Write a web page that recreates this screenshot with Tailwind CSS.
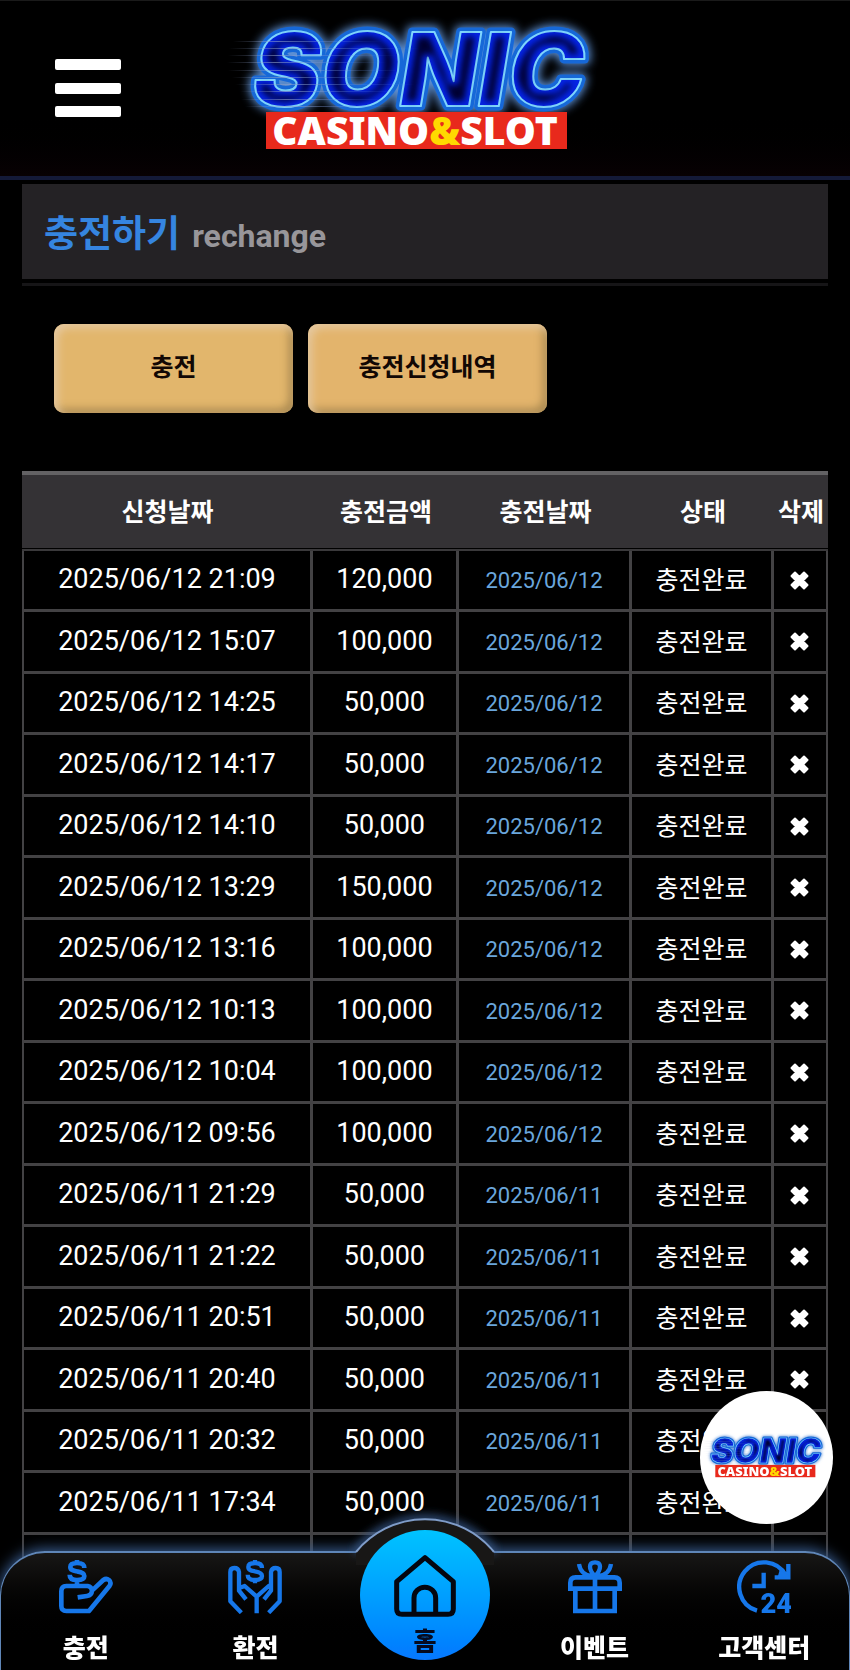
<!DOCTYPE html>
<html lang="ko">
<head>
<meta charset="utf-8">
<meta name="viewport" content="width=device-width, initial-scale=1">
<title>충전하기</title>
<script src="https://cdn.jsdelivr.net/npm/@tailwindcss/browser@4"></script>
</head>
<body class="min-h-screen bg-black text-white font-['Roboto','Noto_Sans_CJK_KR',sans-serif]">

<!-- shared logo artwork -->
<svg class="absolute size-0" aria-hidden="true">
  <defs>
    <linearGradient id="speed" x1="0" x2="1"><stop offset="0" stop-color="#8fa0c8" stop-opacity="0"/><stop offset=".3" stop-color="#8fa0c8" stop-opacity=".6"/><stop offset="1" stop-color="#4f7fe8" stop-opacity="0"/></linearGradient>
    <filter id="glow" x="-20%" y="-40%" width="140%" height="180%"><feGaussianBlur stdDeviation="5"/></filter>
    <filter id="core" x="-5%" y="-5%" width="110%" height="110%"><feMorphology operator="erode" radius="5"/><feGaussianBlur stdDeviation="3"/></filter>
    <symbol id="logo" overflow="visible">
      <g font-family="Inter, sans-serif" font-weight="900" font-style="italic" font-size="102" stroke-linejoin="round">
        <text x="33" y="96" fill="#3f7fd0" stroke="#5f93d8" stroke-width="12" filter="url(#glow)" aria-hidden="true">SONIC</text>
        <text x="33" y="96" fill="#1668d8" stroke="#1668d8" stroke-width="9" aria-hidden="true">SONIC</text>
        <text x="33" y="96" fill="#0423e6" stroke="#7fd6ff" stroke-width="2">SONIC</text>
        <text x="33" y="96" fill="#020230" filter="url(#core)" aria-hidden="true">SONIC</text>
      </g>
      <g fill="url(#speed)">
        <rect x="13" y="31" width="150" height="1"/><rect x="9" y="38" width="190" height="1"/><rect x="8" y="45" width="170" height="1"/><rect x="7" y="52" width="160" height="1"/><rect x="8" y="60" width="180" height="1"/><rect x="12" y="67" width="160" height="1"/><rect x="15" y="74" width="180" height="1"/><rect x="20" y="81" width="160" height="1"/><rect x="21" y="89" width="150" height="1"/><rect x="25" y="96" width="150" height="1"/>
      </g>
      <rect x="46" y="102" width="301" height="37" fill="#e8291c"/>
      <text x="195" y="135" text-anchor="middle" font-family="'Noto Sans', sans-serif" font-weight="900" font-size="39" fill="#fff">CASINO<tspan fill="#ffd900">&amp;</tspan>SLOT</text>
    </symbol>
  </defs>
</svg>

<header class="grid h-[180px] grid-cols-[1fr_auto_1fr] border-t border-b-4 border-t-[#1a1a1a] border-b-[#141a38] bg-linear-to-b from-black from-60% to-[#080103]">
  <button type="button" aria-label="메뉴" class="mt-[58px] ml-[55px] flex h-[58px] w-[66px] flex-col justify-between">
    <span class="h-[11px] w-full rounded-xs bg-white"></span>
    <span class="h-[11px] w-full rounded-xs bg-white"></span>
    <span class="h-[11px] w-full rounded-xs bg-white"></span>
  </button>
  <a href="#" aria-label="SONIC CASINO&amp;SLOT" class="mt-[9px]">
    <svg class="h-[160px] w-[400px]" viewBox="5 0 400 160"><use href="#logo"/></svg>
  </a>
</header>

<main class="px-[22px] pt-1">
  <div class="border-b-3 border-[#161517] pb-1">
    <h1 class="flex h-[95px] items-baseline gap-3 bg-[#242225] px-[22px] pt-6 text-[37px] leading-[54px] font-bold text-[#3585e0]">충전하기 <small class="text-[32px] font-bold text-[#98969a]">rechange</small></h1>
  </div>

  <div class="mt-[38px] flex gap-[15px] px-8">
    <button type="button" class="h-[89px] w-[239px] rounded-[10px] bg-[#e2b66c] pb-0.5 text-[25px] font-bold text-[#120804] shadow-[inset_4px_4px_8px_#e6c9a0,inset_-4px_-4px_8px_#a9884f]">충전</button>
    <button type="button" class="h-[89px] w-[239px] rounded-[10px] bg-[#e3b46c] pb-0.5 text-[25px] font-bold text-[#120804] shadow-[inset_4px_4px_8px_#e6c9a0,inset_-4px_-4px_8px_#a9884f]">충전신청내역</button>
  </div>

  <table class="mt-[58px] w-full table-fixed border-separate border-spacing-0 text-center">
    <thead class="text-[25px] leading-8">
      <tr class="h-[77px]">
        <th class="w-[36.1%] border-t-4 border-[#636264] bg-[#343235] p-0 pt-0.5">신청날짜</th>
        <th class="w-[18.1%] border-t-4 border-[#636264] bg-[#343235] p-0 pt-0.5">충전금액</th>
        <th class="w-[21.5%] border-t-4 border-[#636264] bg-[#343235] p-0 pt-0.5">충전날짜</th>
        <th class="w-[17.6%] border-t-4 border-[#636264] bg-[#343235] p-0 pt-0.5">상태</th>
        <th class="border-t-4 border-[#636264] bg-[#343235] p-0 pt-0.5 whitespace-nowrap">삭제</th>
      </tr>
      <tr class="h-[3px]"><td colspan="5" class="border-t border-b-2 border-t-black border-b-[#3a393b] p-0"></td></tr>
    </thead>
    <tbody id="rows" class="text-[27px] leading-8"></tbody>
  </table>
</main>

<a href="#" aria-label="SONIC CASINO&amp;SLOT" class="fixed right-[17px] bottom-[146px] flex size-[133px] items-center rounded-full bg-white">
  <svg class="w-full" viewBox="0 0 400 160"><use href="#logo"/></svg>
</a>

<nav class="fixed inset-x-0 bottom-0 h-[119px] rounded-t-[45px] border-x border-t-2 border-[#5f86b8] bg-linear-to-b from-[#181716] to-black to-80% text-[25px] leading-8 font-black shadow-[0_-2px_14px_#3a5f94]">
  <svg class="absolute -top-[48px] left-1/2 h-[60px] w-[180px] -translate-x-1/2" viewBox="0 0 180 60" fill="none" aria-hidden="true">
    <path d="M21 47A89 89 0 0 1 159 47" stroke="#3a5f94" stroke-width="7" filter="url(#glow)"/>
    <path d="M21 47A89 89 0 0 1 159 47V60H21Z" fill="#181716"/>
    <path d="M21 47A89 89 0 0 1 159 47" stroke="#7f9cc8" stroke-width="2"/>
  </svg>
  <ul class="relative grid grid-cols-5 text-[#1677ea]">
    <li><a href="#" class="flex flex-col items-center gap-[19px] pt-[7px]">
      <svg class="size-[54px]" viewBox="0 0 162 162" fill="none" stroke="currentColor" stroke-width="14" stroke-linejoin="round">
        <path d="M76 24C76 12 68 9 54 9S34 13 34 21C34 31 44 32 54 34C68 36 76 40 76 48C76 57 66 60 54 60S32 56 32 44M54 0V9M54 60V78"/>
        <path d="M56 112L84 108Q98 106 99 92L133 60Q142 54 150 60Q158 67 152 77L90 153H22Q7 153 7 138V94Q7 78 22 78H86Q98 80 99 92"/>
      </svg><span class="text-white">충전</span></a></li>
    <li><a href="#" class="flex flex-col items-center gap-[19px] pt-[7px]">
      <svg class="size-[54px]" viewBox="0 0 162 162" fill="none" stroke="currentColor" stroke-width="13" stroke-linejoin="round">
        <path d="M102 24C102 12 94 9 81 9S61 13 61 21C61 31 70 32 81 34C94 36 102 40 102 48C102 57 94 60 81 60S59 56 59 44M81 0V9M81 60V70"/>
        <path d="M40 158L7 124V36Q7 24 19 24Q31 24 33 36V92L54 118M34 84L50 78L86 110L122 78L130 84M86 108V160M122 158L155 124V36Q155 24 143 24Q131 24 129 36V92L108 118"/>
      </svg><span class="text-white">환전</span></a></li>
    <li class="flex justify-center"><a href="#" class="-mt-[23px] flex size-[130px] flex-col items-center rounded-full bg-linear-to-b from-[#00c3ff] to-[#0878ff] pt-[25px] text-[#050b20]">
      <svg class="size-[62px]" viewBox="0 0 186 186" fill="none" stroke="#040610" stroke-width="15" stroke-linejoin="round">
        <path d="M93 8L178 80V162Q178 178 162 178H24Q8 178 8 162V80ZM60 178V129A32 32 0 0 1 125 129V178"/>
      </svg><span class="mt-[9px]">홈</span></a></li>
    <li><a href="#" class="flex flex-col items-center gap-[19px] pt-[7px]">
      <svg class="size-[54px]" viewBox="0 0 162 162" fill="none" stroke="currentColor" stroke-width="14">
        <path d="M7 86V68Q7 52 23 52H139Q155 52 155 68V86ZM22 90V153H140V90M81 44V153"/>
        <path d="M81 48C60 28 62 7 81 7S102 28 81 48ZM33 12Q38 44 70 48M129 12Q124 44 92 48" stroke-width="13"/>
      </svg><span class="text-white">이벤트</span></a></li>
    <li><a href="#" class="flex flex-col items-center gap-[19px] pt-[7px]">
      <svg class="size-[54px]" viewBox="0 0 162 162" fill="none" stroke="currentColor" stroke-width="13">
        <path d="M60 152A74 74 0 1 1 146 46M154 12V52H113M80 38V78H46"/>
        <path d="M128 30L158 48L120 58Z" fill="currentColor" stroke="none"/>
        <text x="118" y="159" text-anchor="middle" font-family="Roboto, sans-serif" font-weight="900" font-size="82" fill="currentColor" stroke="none">24</text>
      </svg><span class="text-white">고객센터</span></a></li>
  </ul>
</nav>

<script>
  const data = [
    ['2025/06/12', '21:09', '120,000'], ['2025/06/12', '15:07', '100,000'],
    ['2025/06/12', '14:25', '50,000'], ['2025/06/12', '14:17', '50,000'],
    ['2025/06/12', '14:10', '50,000'], ['2025/06/12', '13:29', '150,000'],
    ['2025/06/12', '13:16', '100,000'], ['2025/06/12', '10:13', '100,000'],
    ['2025/06/12', '10:04', '100,000'], ['2025/06/12', '09:56', '100,000'],
    ['2025/06/11', '21:29', '50,000'], ['2025/06/11', '21:22', '50,000'],
    ['2025/06/11', '20:51', '50,000'], ['2025/06/11', '20:40', '50,000'],
    ['2025/06/11', '20:32', '50,000'], ['2025/06/11', '17:34', '50,000'],
  ];
  const row = ([date, time, amount]) => `
    <tr class="odd:h-[61px] even:h-[62px]">
      <td class="border-r-3 border-b-3 border-l-2 border-[#434244] p-0 pb-0.5">${date} ${time}</td>
      <td class="border-r-3 border-b-3 border-[#434244] p-0 pb-0.5">${amount}</td>
      <td class="border-r-3 border-b-3 border-[#434244] p-0 pt-0.5 text-[22px] text-[#6aa6dc]">${date}</td>
      <td class="border-r-3 border-b-3 border-[#434244] p-0 pt-0.5 text-[25px]">충전완료</td>
      <td class="border-r-2 border-b-3 border-[#434244] p-0">
        <button type="button" aria-label="삭제" class="mx-auto block"><svg class="size-[19px]" viewBox="0 0 19 19" fill="#fff" stroke="#fff" stroke-width="2" stroke-linejoin="round"><path d="M5 1.5L9.5 6L14 1.5L17.5 5L13 9.5L17.500 14L14 17.5L9.500 13L5 17.500L1.500 14L6 9.500L1.500 5Z"/></svg></button>
      </td>
    </tr>`;
  const blank = `
    <tr class="h-[61px]">
      <td class="border-r-3 border-b-3 border-l-2 border-[#434244]"></td>
      <td class="border-r-3 border-b-3 border-[#434244]"></td>
      <td class="border-r-3 border-b-3 border-[#434244]"></td>
      <td class="border-r-3 border-b-3 border-[#434244]"></td>
      <td class="border-r-2 border-b-3 border-[#434244]"></td>
    </tr>`;
  document.getElementById('rows').innerHTML = data.map(row).join('') + blank;
</script>
</body>
</html>
